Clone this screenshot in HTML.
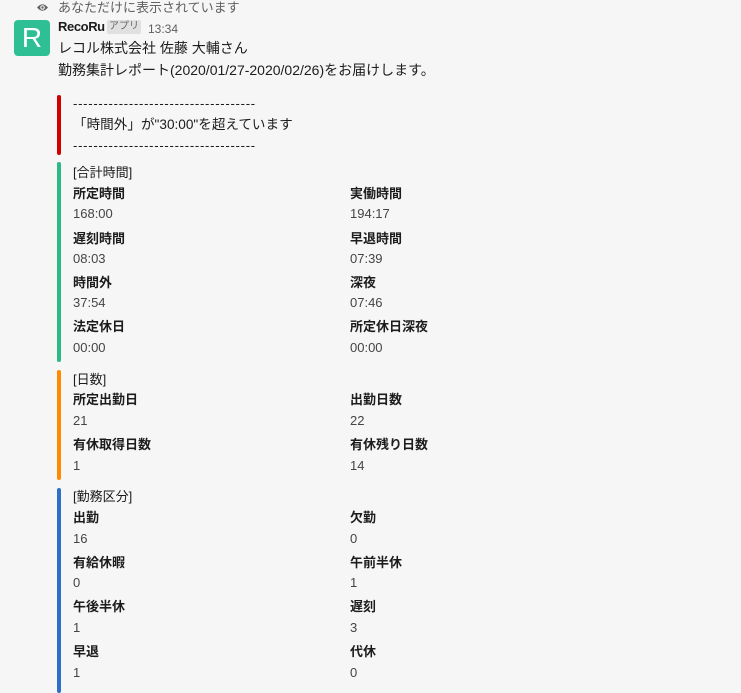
<html><head><style>
body{margin:0;width:741px;height:687px;background:#f6f6f6;font-family:"Liberation Sans","Noto Sans CJK JP",sans-serif;color:#1d1c1d;position:relative;overflow:hidden}
.t{position:absolute;font-size:13px;line-height:20px;white-space:nowrap}
.b{font-weight:bold}
.v{color:#444}
.bar{position:absolute;left:57px;width:4px;border-radius:2px}
.d{letter-spacing:0.75px}
</style></head><body>
<svg style="position:absolute;left:36px;top:2px" width="13" height="11" viewBox="0 0 13 11"><path d="M1 5.5Q6.5 -1 12 5.5Q6.5 12 1 5.5Z" fill="#666"/><circle cx="6.5" cy="5.5" r="2.3" fill="#f6f6f6"/><circle cx="6.5" cy="5.5" r="1.2" fill="#666"/></svg>
<div class="t" style="left:58px;top:-2px;color:#616061;font-size:13px">あなただけに表示されています</div>
<div style="position:absolute;left:14px;top:20px;width:36px;height:36px;background:#2fbf95;border-radius:4px;color:#fff;font-size:28px;line-height:36px;text-align:center;font-family:'Liberation Sans',sans-serif">R</div>
<div class="t b" style="left:58px;top:17px;font-size:13px;letter-spacing:-0.4px">RecoRu</div>
<div class="t" style="left:107px;top:20px;font-size:10px;line-height:14px;background:#e0e0e0;color:#666;padding:0 2px;border-radius:2px">アプリ</div>
<div class="t" style="left:148px;top:19px;font-size:12px;color:#616061">13:34</div>
<div class="t" style="left:58px;top:38px;font-size:14px">レコル株式会社 佐藤 大輔さん</div>
<div class="t" style="left:58px;top:60px;font-size:14px">勤務集計レポート(2020/01/27-2020/02/26)をお届けします。</div>

<div class="bar" style="top:95px;height:60px;background:#d00000"></div>
<div class="t d" style="left:73px;top:94px">------------------------------------</div>
<div class="t" style="left:73px;top:115px;font-size:13.6px">「時間外」が"30:00"を超えています</div>
<div class="t d" style="left:73px;top:136px">------------------------------------</div>

<div class="bar" style="top:162px;height:200px;background:#2eb886"></div>
<div class="t" style="left:73px;top:163px">[合計時間]</div>
<div class="t b" style="left:73px;top:184px">所定時間</div><div class="t v" style="left:73px;top:204px">168:00</div>
<div class="t b" style="left:350px;top:184px">実働時間</div><div class="t v" style="left:350px;top:204px">194:17</div>
<div class="t b" style="left:73px;top:229px">遅刻時間</div><div class="t v" style="left:73px;top:249px">08:03</div>
<div class="t b" style="left:350px;top:229px">早退時間</div><div class="t v" style="left:350px;top:249px">07:39</div>
<div class="t b" style="left:73px;top:273px">時間外</div><div class="t v" style="left:73px;top:293px">37:54</div>
<div class="t b" style="left:350px;top:273px">深夜</div><div class="t v" style="left:350px;top:293px">07:46</div>
<div class="t b" style="left:73px;top:317px">法定休日</div><div class="t v" style="left:73px;top:338px">00:00</div>
<div class="t b" style="left:350px;top:317px">所定休日深夜</div><div class="t v" style="left:350px;top:338px">00:00</div>

<div class="bar" style="top:370px;height:110px;background:#ff8a00"></div>
<div class="t" style="left:73px;top:370px">[日数]</div>
<div class="t b" style="left:73px;top:390px">所定出勤日</div><div class="t v" style="left:73px;top:411px">21</div>
<div class="t b" style="left:350px;top:390px">出勤日数</div><div class="t v" style="left:350px;top:411px">22</div>
<div class="t b" style="left:73px;top:435px">有休取得日数</div><div class="t v" style="left:73px;top:456px">1</div>
<div class="t b" style="left:350px;top:435px">有休残り日数</div><div class="t v" style="left:350px;top:456px">14</div>

<div class="bar" style="top:488px;height:205px;background:#2f6fc8"></div>
<div class="t" style="left:73px;top:487px">[勤務区分]</div>
<div class="t b" style="left:73px;top:508px">出勤</div><div class="t v" style="left:73px;top:529px">16</div>
<div class="t b" style="left:350px;top:508px">欠勤</div><div class="t v" style="left:350px;top:529px">0</div>
<div class="t b" style="left:73px;top:553px">有給休暇</div><div class="t v" style="left:73px;top:573px">0</div>
<div class="t b" style="left:350px;top:553px">午前半休</div><div class="t v" style="left:350px;top:573px">1</div>
<div class="t b" style="left:73px;top:597px">午後半休</div><div class="t v" style="left:73px;top:618px">1</div>
<div class="t b" style="left:350px;top:597px">遅刻</div><div class="t v" style="left:350px;top:618px">3</div>
<div class="t b" style="left:73px;top:642px">早退</div><div class="t v" style="left:73px;top:663px">1</div>
<div class="t b" style="left:350px;top:642px">代休</div><div class="t v" style="left:350px;top:663px">0</div>
</body></html>
